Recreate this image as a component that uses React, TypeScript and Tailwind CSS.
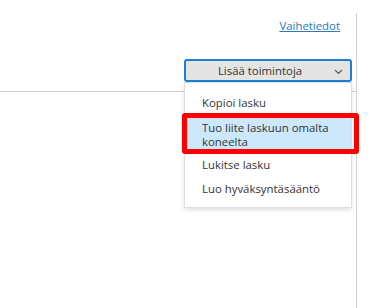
import React from "react";

export default function App() {
  const font = { fontFamily: '"Open Sans", "Liberation Sans", sans-serif' };
  return (
    <div className="relative w-[392px] h-[308px] bg-white overflow-hidden" style={font}>
      <div className="flex h-full">
        <div className="w-[357px] mt-[13px] border-r border-[#cfcfcf] flex flex-col">
          <div className="h-[79px] border-b border-[#cfcfcf] flex flex-col items-end">
            <a href="#" className="mt-[5px] mr-[16px] text-[11.4px] leading-[16px] text-[#2a78bd] underline">
              Vaihetiedot
            </a>
            <div className="relative mt-[25px] mr-[4px] w-[168px]">
              <button className="w-full h-[23px] rounded-[3px] border-2 border-[#1b7fd4] bg-[#e4e4e4] flex items-center justify-center relative text-[11.4px] text-[#333]">
                <span className="-ml-[16px]">Lisää toimintoja</span>
                <svg className="absolute right-[7px] top-[8px]" width="9" height="6" viewBox="0 0 9 6" fill="none">
                  <path d="M1 1l3.5 3.5L8 1" stroke="#555" strokeWidth="1.1" />
                </svg>
              </button>
              <div className="absolute left-0 top-full w-full h-[126px] bg-white border border-[#dedede] shadow-[0_2px_4px_rgba(0,0,0,0.12)] pt-[8px] text-[11.4px] text-[#333] z-10">
                <div className="pl-[17px] pr-[16px] py-[5px] leading-[14px]">Kopioi lasku</div>
                <div className="pl-[17px] pr-[16px] pt-[6px] pb-[4px] leading-[14px] bg-[#cde8fb]">Tuo liite laskuun omalta koneelta</div>
                <div className="pl-[17px] pr-[16px] py-[5px] leading-[14px]">Lukitse lasku</div>
                <div className="pl-[17px] pr-[16px] py-[5px] leading-[14px]">Luo hyväksyntäsääntö</div>
              </div>
            </div>
          </div>
        </div>
      </div>
      <div className="absolute left-[182px] top-[113px] w-[177px] h-[41px] border-[5px] border-[#ff0000] rounded-[3px] z-20" />
    </div>
  );
}
